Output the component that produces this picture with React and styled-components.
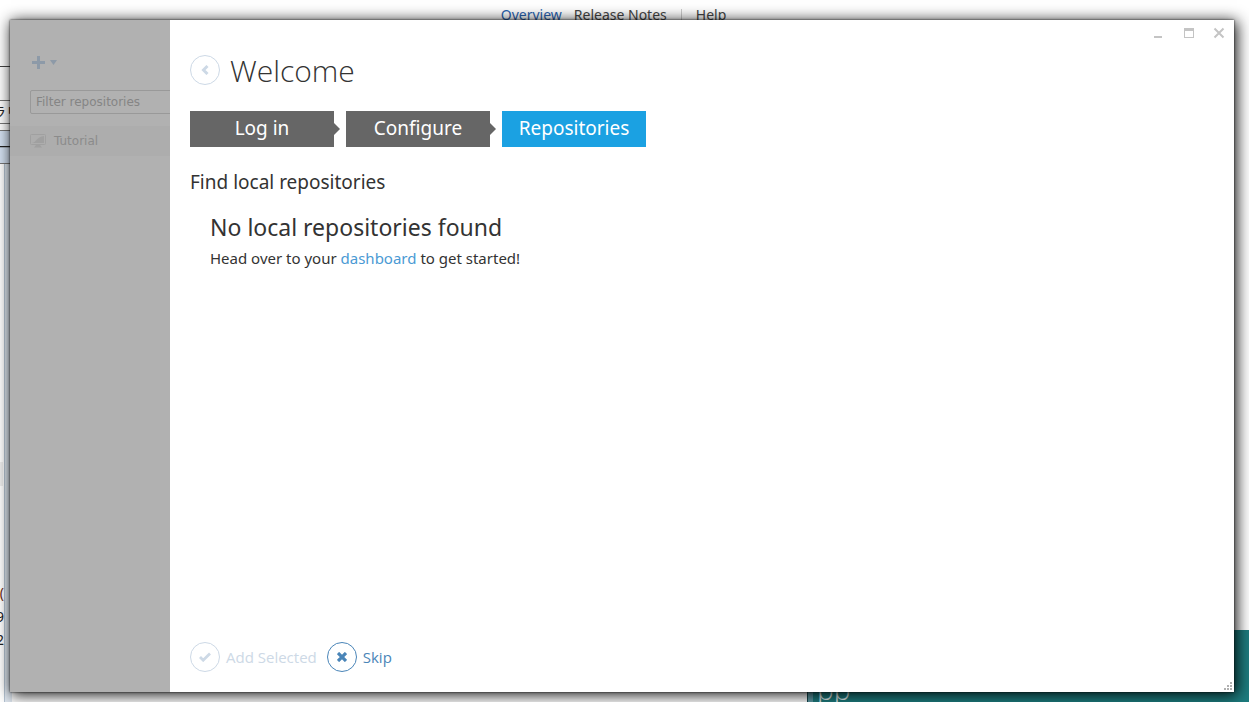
import React from 'react';
import styled, { createGlobalStyle, css } from 'styled-components';

const ui = '"Open Sans", "Noto Sans", sans-serif';
const noto = '"Noto Sans", "Noto Sans CJK JP", sans-serif';
const verdana = '"DejaVu Sans", sans-serif';

const GlobalStyle = createGlobalStyle`
  *, *::before, *::after { box-sizing: border-box; }
  body { margin: 0; background: #fff; font-family: ${noto}; color: #333; }
  h1, h2, h3, p, ul, ol { margin: 0; padding: 0; font-weight: 400; }
  ul, ol { list-style: none; }
  button, input { font: inherit; }
  svg { display: block; }
`;

const Desktop = styled.div`
  position: relative;
  display: flex;
  min-height: 100vh;
  padding: 20px 15px 10px 10px;
  overflow: hidden;
`;

const Backdrop = styled.div`
  position: absolute;
  inset: 0;
  overflow: hidden;
`;

const SiteNav = styled.nav`
  display: flex;
  align-items: center;
  justify-content: center;
  gap: 12px;
  height: 30px;
  padding-right: 22px;
  font-size: 14px;
  line-height: 30px;
`;

const SiteLink = styled.a`
  color: ${p => (p.$current ? '#2a62ae' : '#444')};
  text-decoration: none;
`;

const Divider = styled.span`
  width: 1px;
  height: 12px;
  margin: 0 2px;
  background: #ccc;
`;

const BrowserEdge = styled.div`
  position: absolute;
  left: 0;
  top: 66px;
  bottom: 0;
  width: 12px;
  border-top: 1px solid #444;
  font-size: 14px;
  color: #222;
`;

const EdgeStrip = styled.div`
  position: absolute;
  left: 0;
  width: ${p => p.$width || 12}px;
  top: ${p => p.$top}px;
  height: ${p => p.$height}px;
  line-height: ${p => p.$height - 2}px;
  border: solid #777;
  border-width: ${p => (p.$plain ? 0 : '1px 0')};
  background: ${p => p.$fill || 'transparent'};
  color: ${p => p.$ink || 'inherit'};
  overflow: hidden;
  white-space: nowrap;
  display: flex;
  justify-content: flex-end;
`;

const EdgeRail = styled.div`
  position: absolute;
  top: 97px;
  bottom: 0;
  left: 4px;
  width: 8px;
  background: #dfe7f0;
  border-left: 1px solid #b5c3d2;
`;

const Banner = styled.div`
  position: absolute;
  right: 0;
  bottom: 0;
  width: 442px;
  height: 72px;
  padding: 42px 0 0 9px;
  border-left: 1px solid #16474d;
  background: linear-gradient(90deg, #5d9aa5 5px, #1d7c7e 5px);
  color: #e4f0f0;
  font: 300 28px/34px ${ui};
`;

const Window = styled.div`
  position: relative;
  flex: 1;
  display: flex;
  min-width: 0;
  background: #fff;
  box-shadow: 0 0 2px rgba(0, 0, 0, 0.8), 2px 2px 14px 1px rgba(0, 0, 0, 0.9);
`;

const Sidebar = styled.aside`
  width: 160px;
  flex: none;
  padding-top: 31px;
  overflow: hidden;
  background: #b1b1b1;
  color: #8b8b8b;
  font-family: ${verdana};
`;

const AddButton = styled.button`
  display: flex;
  align-items: center;
  gap: 5px;
  height: 22px;
  margin-left: 22px;
  padding: 0;
  border: 0;
  background: none;
  color: #8d9aa8;
`;

const FilterInput = styled.input`
  display: block;
  width: 180px;
  height: 24px;
  margin: 17px 0 0 20px;
  padding: 0 5px;
  border: 1px solid #999;
  border-radius: 2px;
  background: transparent;
  color: #858585;
  font: 12px/20px ${verdana};
  &::placeholder { color: #858585; opacity: 1; }
`;

const RepoList = styled.ul`
  margin-top: 12px;
`;

const RepoItem = styled.li`
  display: flex;
  align-items: center;
  gap: 8px;
  height: 30px;
  padding-left: 20px;
  background: #adadad;
  font-size: 12px;
`;

const Main = styled.main`
  flex: 1;
  display: flex;
  flex-direction: column;
  min-width: 0;
  padding: 32px 20px 20px;
`;

const TitleRow = styled.header`
  display: flex;
  align-items: center;
  gap: 10px;
  height: 36px;
`;

const Title = styled.h1`
  padding-top: 2px;
  font: 300 30px/40px ${ui};
`;

const Circle = styled.span`
  display: flex;
  align-items: center;
  justify-content: center;
  width: 30px;
  height: 30px;
  border: 1px solid currentColor;
  border-radius: 50%;
`;

const ActionButton = styled.button`
  display: flex;
  align-items: center;
  gap: 6px;
  padding: 0;
  border: 0;
  background: none;
  color: #4a85b8;
  font: 15px/30px ${ui};
  &:disabled { color: #cdd9e6; }
`;

const Steps = styled.ol`
  display: flex;
  flex-wrap: wrap;
  gap: 12px;
  margin-top: 23px;
`;

const Step = styled.li`
  position: relative;
  width: 144px;
  height: 36px;
  background: #666;
  color: #fff;
  font: 19px/34px ${noto};
  text-align: center;
  ${p => p.$active
    ? css`background: #1ba1e2;`
    : css`
      &::after {
        content: '';
        position: absolute;
        left: 100%;
        top: 12px;
        border: 6px solid transparent;
        border-left-color: #666;
        border-right-width: 0;
      }
    `}
`;

const SectionTitle = styled.h2`
  margin-top: 20px;
  font: 19px/30px ${noto};
`;

const EmptyState = styled.section`
  margin-top: 14px;
  padding-left: 20px;
`;

const EmptyTitle = styled.h3`
  font: 23px/32px ${noto};
`;

const EmptyText = styled.p`
  font: 15px/30px ${noto};
`;

const TextLink = styled.a`
  color: #4a9ad4;
  text-decoration: none;
`;

const Footer = styled.footer`
  display: flex;
  gap: 10px;
  margin-top: auto;
`;

const WindowControls = styled.div`
  position: absolute;
  top: 6px;
  right: 8px;
  display: flex;
  gap: 16px;
`;

const ControlButton = styled.button`
  width: 14px;
  height: 14px;
  padding: 0;
  border: 0;
  background: none;
  color: #c4c4c4;
`;

const ResizeGrip = styled.svg`
  position: absolute;
  right: 2px;
  bottom: 2px;
  color: #b0b0b0;
`;

const steps = [
  { label: 'Log in' },
  { label: 'Configure' },
  { label: 'Repositories', active: true },
];

const gripDots = [[6, 0], [3, 3], [6, 3], [0, 6], [3, 6], [6, 6]];

export default function App() {
  return (
    <Desktop>
      <GlobalStyle />
      <Backdrop>
        <SiteNav>
          <SiteLink href="#overview" $current>Overview</SiteLink>
          <SiteLink href="#notes">Release Notes</SiteLink>
          <Divider />
          <SiteLink href="#help">Help</SiteLink>
        </SiteNav>
        <BrowserEdge>
          <EdgeRail />
          <EdgeStrip $top={33} $height={24} $width={20}>ラリ</EdgeStrip>
          <EdgeStrip $top={63} $height={34} $fill="#d5e2f3">ー</EdgeStrip>
          <EdgeStrip $top={395} $height={24} $width={3} $fill="#eee" $plain />
          <EdgeStrip $top={516} $height={22} $width={4} $ink="#6b2a12" $plain>(</EdgeStrip>
          <EdgeStrip $top={540} $height={22} $width={4} $plain>9</EdgeStrip>
          <EdgeStrip $top={563} $height={22} $width={4} $plain>2</EdgeStrip>
        </BrowserEdge>
        <Banner>pp</Banner>
      </Backdrop>

      <Window>
        <Sidebar>
          <AddButton aria-label="Add repository">
            <svg width="13" height="13" viewBox="0 0 13 13" fill="currentColor">
              <path d="M5 0h3v5h5v3H8v5H5V8H0V5h5z" />
            </svg>
            <svg width="7" height="5" viewBox="0 0 7 5" fill="currentColor">
              <path d="M0 0h7L3.5 5z" />
            </svg>
          </AddButton>
          <FilterInput type="text" aria-label="Filter repositories" placeholder="Filter repositories" />
          <RepoList>
            <RepoItem>
              <svg width="16" height="14" viewBox="0 0 16 14" fill="none" stroke="#a0a0a0">
                <rect x=".5" y=".5" width="15" height="10" rx="1" />
                <path d="M2 9C7 8 6 3 14 2v7z" fill="#a0a0a0" stroke="none" />
                <path d="M6 11h4l2 2.5H4z" fill="#a0a0a0" stroke="none" />
              </svg>
              Tutorial
            </RepoItem>
          </RepoList>
        </Sidebar>

        <Main>
          <TitleRow>
            <ActionButton aria-label="Back" disabled>
              <Circle>
                <svg width="8" height="10" viewBox="0 0 8 10" fill="none" stroke="currentColor" strokeWidth="3">
                  <path d="M6.5 1L2.5 5l4 4" />
                </svg>
              </Circle>
            </ActionButton>
            <Title>Welcome</Title>
          </TitleRow>
          <Steps>
            {steps.map(s => (
              <Step key={s.label} $active={s.active}>{s.label}</Step>
            ))}
          </Steps>
          <SectionTitle>Find local repositories</SectionTitle>
          <EmptyState>
            <EmptyTitle>No local repositories found</EmptyTitle>
            <EmptyText>
              Head over to your <TextLink href="#dashboard">dashboard</TextLink> to get started!
            </EmptyText>
          </EmptyState>
          <Footer>
            <ActionButton disabled>
              <Circle>
                <svg width="12" height="10" viewBox="0 0 12 10" fill="none" stroke="currentColor" strokeWidth="2.8">
                  <path d="M1 5l3.2 3.2L11 1.5" />
                </svg>
              </Circle>
              Add Selected
            </ActionButton>
            <ActionButton>
              <Circle>
                <svg width="10" height="10" viewBox="0 0 10 10" fill="none" stroke="currentColor" strokeWidth="3.2">
                  <path d="M1 1l8 8M9 1L1 9" />
                </svg>
              </Circle>
              Skip
            </ActionButton>
          </Footer>
        </Main>

        <WindowControls>
          <ControlButton aria-label="Minimize">
            <svg width="14" height="14" fill="currentColor"><path d="M2 10h8v2H2z" /></svg>
          </ControlButton>
          <ControlButton aria-label="Maximize">
            <svg width="14" height="14" fill="currentColor">
              <path fillRule="evenodd" d="M2 2h10v10H2zM3 5v6h8V5z" />
            </svg>
          </ControlButton>
          <ControlButton aria-label="Close">
            <svg width="14" height="14" fill="none" stroke="currentColor" strokeWidth="2">
              <path d="M2.5 2.5l9 9M11.5 2.5l-9 9" />
            </svg>
          </ControlButton>
        </WindowControls>
        <ResizeGrip width="8" height="8" fill="currentColor" aria-hidden="true">
          {gripDots.map(([x, y]) => (
            <rect key={`${x}-${y}`} x={x} y={y} width="2" height="2" />
          ))}
        </ResizeGrip>
      </Window>
    </Desktop>
  );
}
